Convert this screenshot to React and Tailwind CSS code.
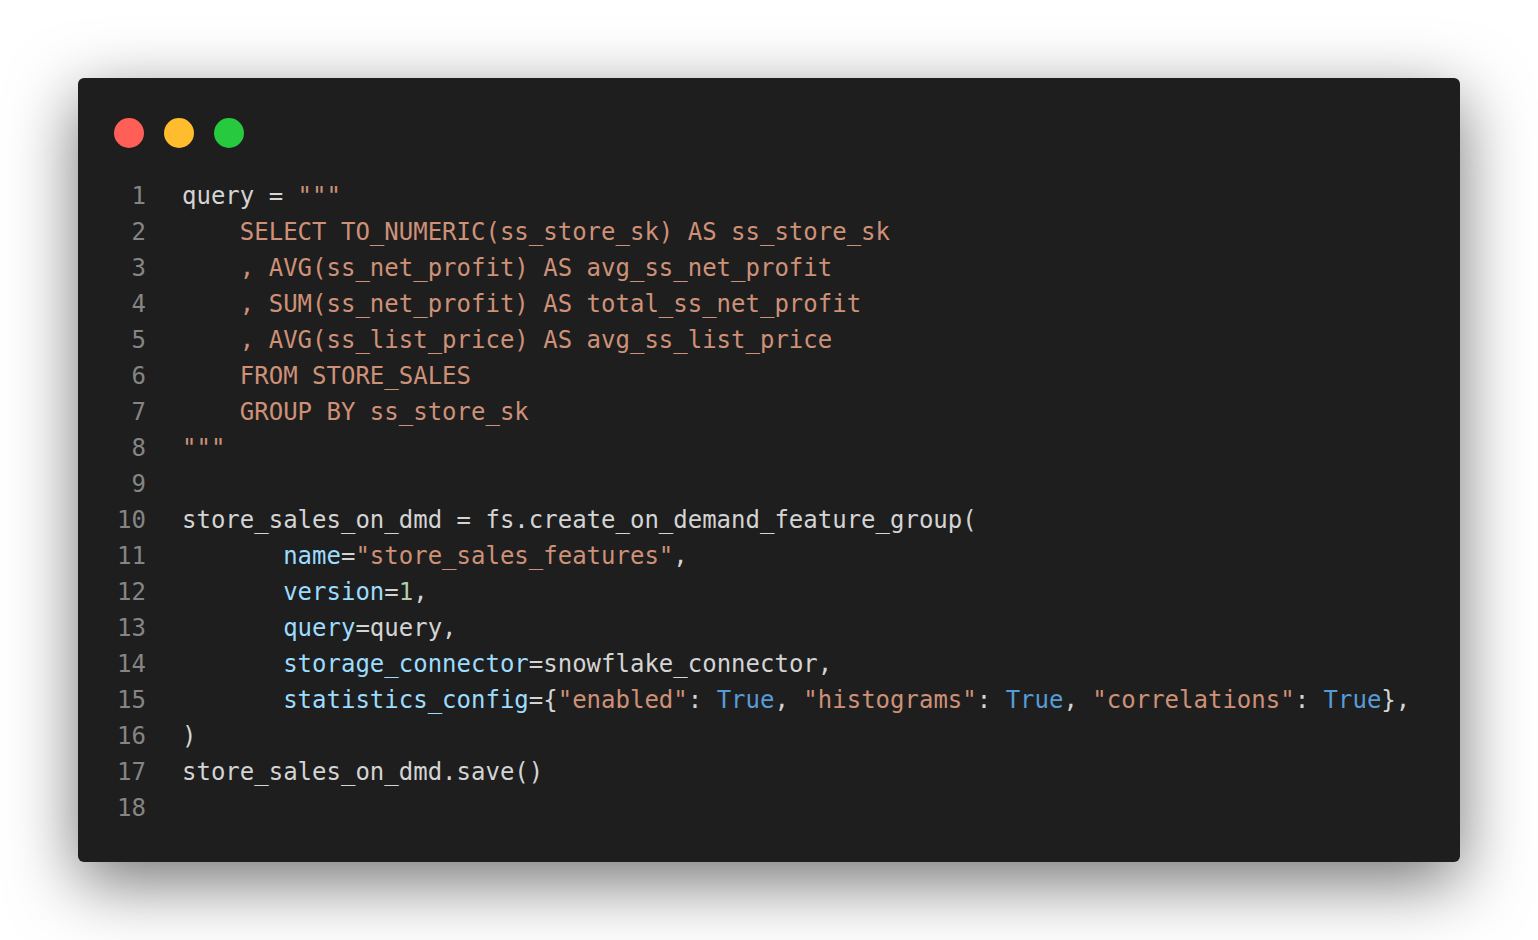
import React from "react";

const D = "text-[#d4d4d4]";
const S = "text-[#ce9178]";
const P = "text-[#9cdcfe]";
const K = "text-[#569cd6]";
const N = "text-[#b5cea8]";

const lines = [
  [["query = ", D], ['"""', S]],
  [["    SELECT TO_NUMERIC(ss_store_sk) AS ss_store_sk", S]],
  [["    , AVG(ss_net_profit) AS avg_ss_net_profit", S]],
  [["    , SUM(ss_net_profit) AS total_ss_net_profit", S]],
  [["    , AVG(ss_list_price) AS avg_ss_list_price", S]],
  [["    FROM STORE_SALES", S]],
  [["    GROUP BY ss_store_sk", S]],
  [['"""', S]],
  [],
  [["store_sales_on_dmd = fs.create_on_demand_feature_group(", D]],
  [["       ", D], ["name", P], ["=", D], ['"store_sales_features"', S], [",", D]],
  [["       ", D], ["version", P], ["=", D], ["1", N], [",", D]],
  [["       ", D], ["query", P], ["=query,", D]],
  [["       ", D], ["storage_connector", P], ["=snowflake_connector,", D]],
  [
    ["       ", D],
    ["statistics_config", P],
    ["={", D],
    ['"enabled"', S],
    [": ", D],
    ["True", K],
    [", ", D],
    ['"histograms"', S],
    [": ", D],
    ["True", K],
    [", ", D],
    ['"correlations"', S],
    [": ", D],
    ["True", K],
    ["},", D],
  ],
  [[")", D]],
  [["store_sales_on_dmd.save()", D]],
  [],
];

export default function App() {
  return (
    <div className="w-[1538px] h-[940px] bg-white p-[78px] flex">
      <div className="flex-1 bg-[#1e1e1e] rounded-[6px] shadow-[0_20px_68px_rgba(0,0,0,0.55)] pt-[40px] pl-[36px] flex flex-col">
        <div className="flex gap-[20px] h-[30px]">
          <div className="w-[30px] h-[30px] rounded-full bg-[#ff5f56]" />
          <div className="w-[30px] h-[30px] rounded-full bg-[#ffbd2e]" />
          <div className="w-[30px] h-[30px] rounded-full bg-[#27c93f]" />
        </div>
        <div
          className="mt-[30px] flex flex-col text-[24px] leading-[36px] whitespace-pre"
          style={{ fontFamily: '"DejaVu Sans Mono", "Liberation Mono", monospace' }}
        >
          {lines.map((toks, i) => (
            <div key={i} className="flex h-[36px]">
              <span className="w-[32px] text-right text-[#858585] mr-[36px] shrink-0">{i + 1}</span>
              <span>
                {toks.map(([t, c], j) => (
                  <span key={j} className={c}>
                    {t}
                  </span>
                ))}
              </span>
            </div>
          ))}
        </div>
      </div>
    </div>
  );
}
